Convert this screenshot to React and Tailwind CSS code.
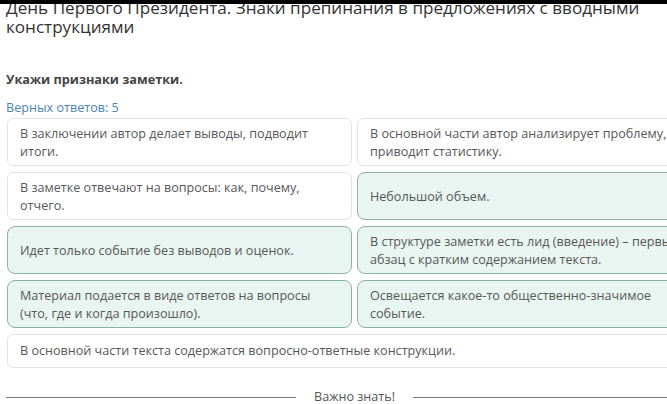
export default function App() {
  const items = [
    { t: "В заключении автор делает выводы, подводит итоги.", g: false },
    { t: "В основной части автор анализирует проблему, приводит статистику.", g: false },
    { t: "В заметке отвечают на вопросы: как, почему, отчего.", g: false },
    { t: "Небольшой объем.", g: true },
    { t: "Идет только событие без выводов и оценок.", g: true },
    { t: "В структуре заметки есть лид (введение) – первый абзац с кратким содержанием текста.", g: true },
    { t: "Материал подается в виде ответов на вопросы (что, где и когда произошло).", g: true },
    { t: "Освещается какое-то общественно-значимое событие.", g: true },
  ];
  return (
    <div
      className="relative w-[667px] h-[404px] overflow-hidden bg-white"
      style={{ fontFamily: '"Open Sans", "Noto Sans", sans-serif' }}
    >
      <div className="absolute top-0 left-0 right-0 h-[4px] bg-black" />
      <div className="w-[740px] pl-[6px]">
        <h1 className="mt-[-2px] text-[17.1px] leading-[19px] text-[#333] font-normal w-[696px]">
          День Первого Президента. Знаки препинания в предложениях с вводными конструкциями
        </h1>
        <div className="mt-[34px] text-[12.7px] leading-[18px] font-bold text-[#444]">
          Укажи признаки заметки.
        </div>
        <div className="mt-[11px] text-[12.6px] leading-[18px] text-[#4a84b0]">
          Верных ответов: 5
        </div>
        <div className="mt-[1px] ml-[1px] grid grid-cols-[345px_350px] gap-x-[5px] gap-y-[6px]">
          {items.map((it, i) => (
            <div
              key={i}
              className={
                it.g
                  ? "flex items-center min-h-[48px] rounded-[8px] border border-[#8ab2a5] bg-[#e8f5f0] px-3 pt-[6px] pb-[4px] text-[12.6px] leading-[18px] text-[#585858]"
                  : "flex items-center min-h-[48px] rounded-[6px] border border-[#e4e4e4] bg-white px-3 pt-[6px] pb-[4px] text-[12.6px] leading-[18px] text-[#585858]"
              }
            >
              <span>{it.t}</span>
            </div>
          ))}
          <div className="col-span-2 flex items-center min-h-[34px] rounded-[6px] border border-[#e4e4e4] bg-white px-3 py-[7px] text-[12.6px] leading-[18px] text-[#585858]">
            В основной части текста содержатся вопросно-ответные конструкции.
          </div>
        </div>
        <div className="mt-[20px] w-[697px] flex items-center gap-[18px] text-[12.6px] leading-[18px] text-[#555]">
          <div className="flex-1 h-px bg-[#777]" />
          <span>Важно знать!</span>
          <div className="flex-1 h-px bg-[#777]" />
        </div>
      </div>
    </div>
  );
}
